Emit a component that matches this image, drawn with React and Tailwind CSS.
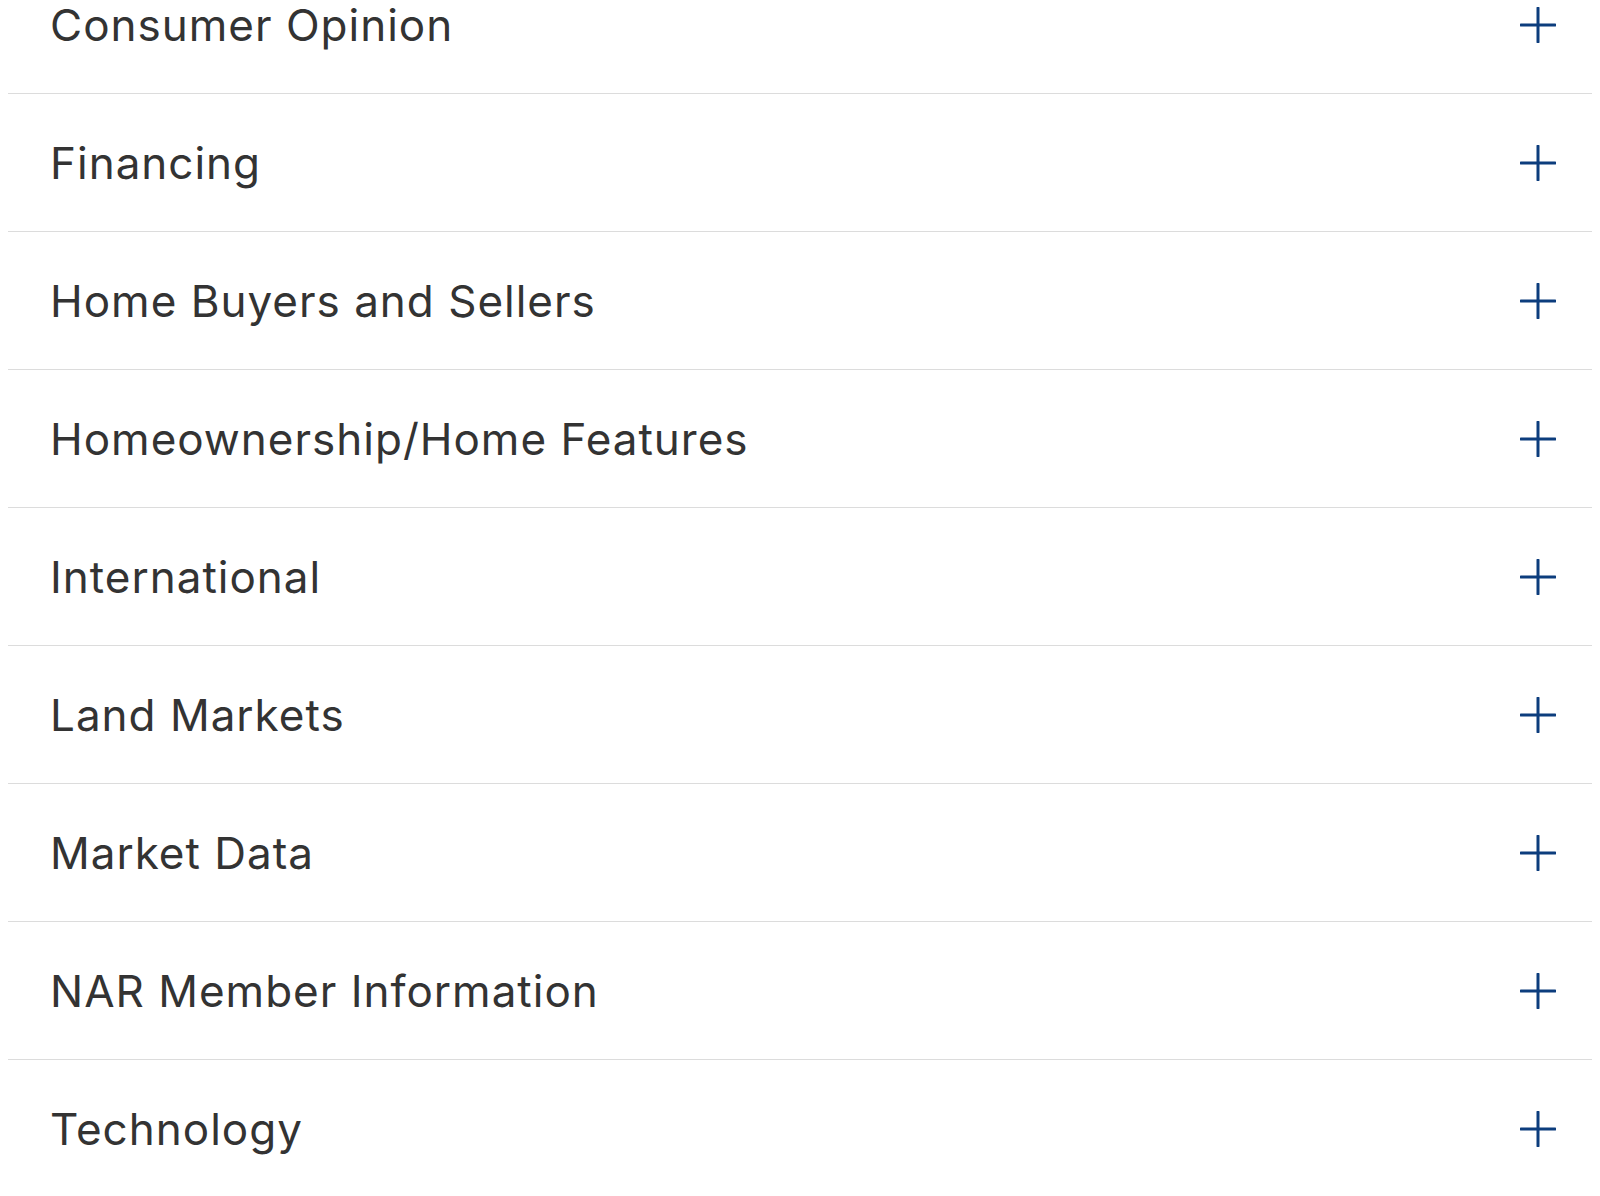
import React from "react";

const items = [
  "Consumer Opinion",
  "Financing",
  "Home Buyers and Sellers",
  "Homeownership/Home Features",
  "International",
  "Land Markets",
  "Market Data",
  "NAR Member Information",
  "Technology",
];

function Plus() {
  return (
    <svg width="36" height="36" viewBox="0 0 36 36" fill="none" className="shrink-0">
      <path d="M18 1V35M1 18H35" stroke="#0c3d7d" strokeWidth="3" strokeLinecap="round" />
    </svg>
  );
}

export default function App() {
  return (
    <div className="bg-white min-h-[1196px] overflow-hidden">
      <div className="mx-2 -mt-[44px]">
        {items.map((t) => (
          <div
            key={t}
            className="h-[138px] border-b border-[#dcdcdc] flex items-center justify-between pl-[42px] pr-[36px]"
          >
            <span
              className="text-[#333333] text-[44px] leading-none tracking-[1px]"
              style={{ fontFamily: "Inter, 'Liberation Sans', sans-serif" }}
            >
              {t}
            </span>
            <Plus />
          </div>
        ))}
      </div>
    </div>
  );
}
